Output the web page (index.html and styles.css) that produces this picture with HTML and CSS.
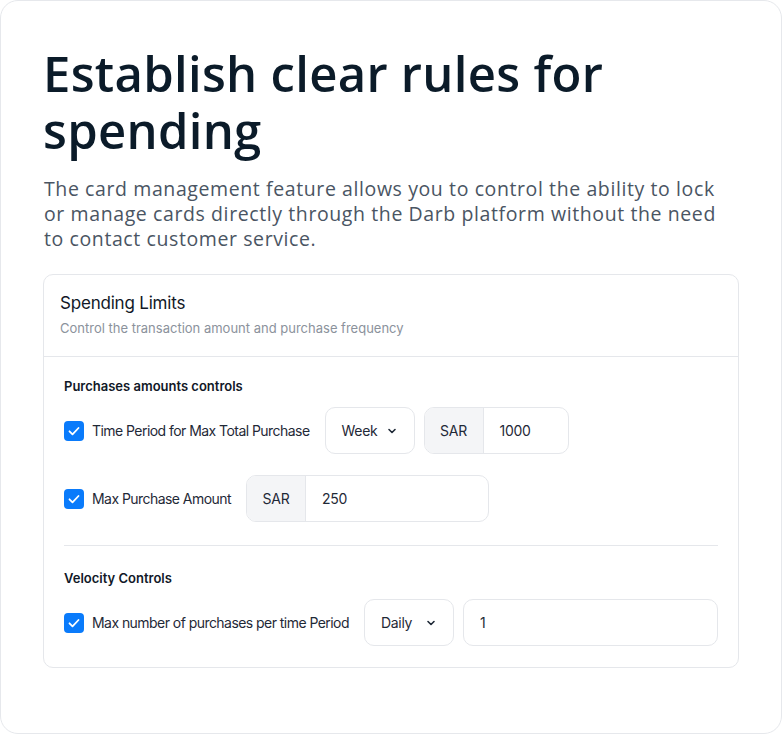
FILE: index.html
```html
<!DOCTYPE html>
<html lang="en">
<head>
<meta charset="utf-8">
<title>Spending rules</title>
<link rel="stylesheet" href="styles.css">
</head>
<body>
<div class="page">
  <h1 class="title">Establish clear rules for spending</h1>
  <p class="lead">The card management feature allows you to control the ability to lock or manage cards directly through the Darb platform without the need to contact customer service.</p>

  <section class="card">
    <header class="card-head">
      <h2 class="card-title">Spending Limits</h2>
      <p class="card-sub">Control the transaction amount and purchase frequency</p>
    </header>
    <div class="card-body">
      <h3 class="group-title">Purchases amounts controls</h3>
      <div class="row">
        <label class="check"><span class="box"><svg viewBox="0 0 20 20" width="20" height="20"><path d="M5.5 10.3l3 3 6-6.3" fill="none" stroke="#fff" stroke-width="1.8" stroke-linecap="round" stroke-linejoin="round"/></svg></span>Time Period for Max Total Purchase</label>
        <div class="select w90">Week<svg class="chev" viewBox="0 0 12 12" width="12" height="12"><path d="M3 4.5l3 3 3-3" fill="none" stroke="#1f2937" stroke-width="1.6" stroke-linecap="round" stroke-linejoin="round"/></svg></div>
        <div class="group w145"><span class="addon">SAR</span><span class="val">1000</span></div>
      </div>
      <div class="row">
        <label class="check"><span class="box"><svg viewBox="0 0 20 20" width="20" height="20"><path d="M5.5 10.3l3 3 6-6.3" fill="none" stroke="#fff" stroke-width="1.8" stroke-linecap="round" stroke-linejoin="round"/></svg></span>Max Purchase Amount</label>
        <div class="group w243"><span class="addon">SAR</span><span class="val">250</span></div>
      </div>
      <hr class="sep">
      <h3 class="group-title">Velocity Controls</h3>
      <div class="row">
        <label class="check"><span class="box"><svg viewBox="0 0 20 20" width="20" height="20"><path d="M5.5 10.3l3 3 6-6.3" fill="none" stroke="#fff" stroke-width="1.8" stroke-linecap="round" stroke-linejoin="round"/></svg></span>Max number of purchases per time Period</label>
        <div class="select w90">Daily<svg class="chev" viewBox="0 0 12 12" width="12" height="12"><path d="M3 4.5l3 3 3-3" fill="none" stroke="#1f2937" stroke-width="1.6" stroke-linecap="round" stroke-linejoin="round"/></svg></div>
        <div class="input grow">1</div>
      </div>
    </div>
  </section>
</div>
</body>
</html>
```
FILE: styles.css
```css
* { box-sizing: border-box; }
html, body { margin: 0; padding: 0; background: #fff; }
body { font-family: Inter, "Noto Sans", sans-serif; color: #111827; }

.page {
  width: 782px;
  height: 734px;
  border: 1px solid #e6e8ec;
  border-radius: 18px;
  padding: 44px 43px 0 42px;
}

.title {
  margin: 0;
  font-family: "Open Sans", sans-serif;
  font-weight: 600;
  font-size: 49px;
  line-height: 57px;
  color: #0b1b29;
  letter-spacing: 0.3px;
}

.lead {
  margin: 17px 0 0 1px;
  font-family: "Open Sans", sans-serif;
  font-size: 19.5px;
  line-height: 25px;
  color: #4a5563;
  letter-spacing: 0.6px;
  width: 692px;
}

.card {
  margin-top: 23px;
  border: 1px solid #e5e7eb;
  border-radius: 10px;
  width: 696px;
  height: 394px;
}

.card-head {
  padding: 17px 16px 19px 16px;
  border-bottom: 1px solid #e5e7eb;
}
.card-title {
  margin: 0;
  font-size: 17px;
  font-weight: 400;
  line-height: 22px;
  color: #111827;
  letter-spacing: -0.2px;
}
.card-sub {
  margin: 6px 0 0;
  font-size: 13px;
  line-height: 17px;
  color: #8b929c;
}

.card-body { padding: 20px 20px 0 20px; }

.group-title {
  margin: 0 0 12px;
  font-size: 13px;
  font-weight: 600;
  line-height: 18px;
  color: #111827;
}

.row {
  display: flex;
  align-items: center;
  gap: 9px;
  margin-bottom: 21px;
}

.check {
  display: flex;
  align-items: center;
  gap: 8px;
  font-size: 14px;
  letter-spacing: -0.55px;
  color: #1f2937;
  margin-right: 6px;
}
.box {
  width: 20px; height: 20px;
  border-radius: 4px;
  background: #0a7bfb;
  display: inline-flex;
}

.select, .group, .input {
  height: 47px;
  border: 1px solid #e5e7eb;
  border-radius: 10px;
  font-size: 14px;
  letter-spacing: -0.3px;
  color: #1f2937;
  display: flex;
  align-items: center;
}
.select { padding: 0 16px; justify-content: space-between; }
.w90 { width: 90px; }
.w145 { width: 145px; }
.w243 { width: 243px; }
.grow { flex: 1; padding: 0 16px; }
.group { overflow: hidden; }
.addon {
  width: 59px; height: 100%;
  background: #f4f5f7;
  border-right: 1px solid #e5e7eb;
  display: flex; align-items: center; justify-content: center;
}
.val { padding-left: 16px; }

.sep {
  border: 0;
  border-top: 1px solid #e5e7eb;
  margin: 23px 0 23px;
}
```
